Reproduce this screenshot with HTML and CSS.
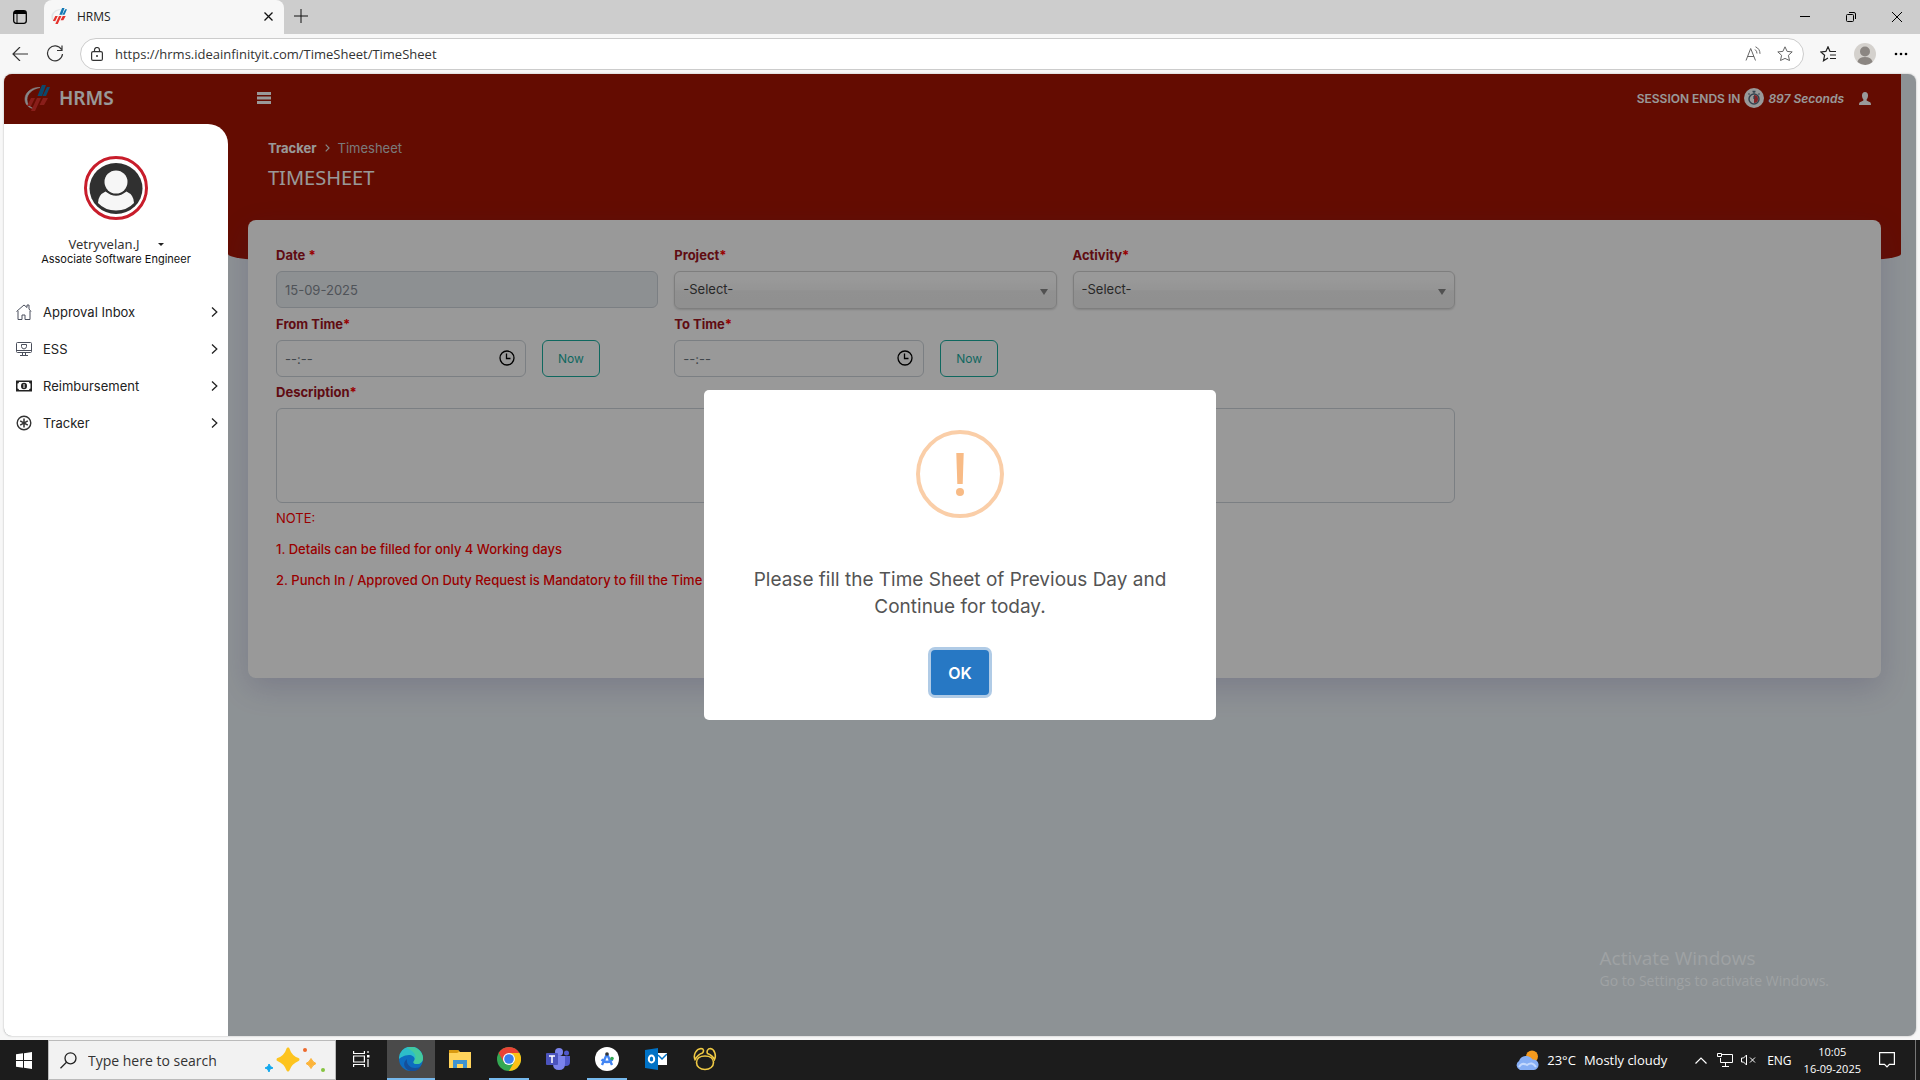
FILE: index.html
```
<!DOCTYPE html>
<html lang="en">
<head>
  <meta charset="UTF-8">
  <title>HRMS</title>
  <link rel="stylesheet" href="styles.css">
</head>
<body>
  <!-- shared logo -->
  <svg width="0" height="0" class="defs">
    <symbol id="logo" viewBox="0 0 26 26">
      <path d="M16 2.500C7 2 1 8 1 14c0 5 3 8.500 8 9.500-4-2-6-5-6-9C3 9 8 4 16 2.500z" fill="#dfe3e6" stroke="#dfe3e6" stroke-width=".6"/>
      <path d="M18 0h4l-4 11h-4.500zM23 2h3l-4 9h-3.500z" fill="#1379b5"/>
      <path d="M7 13h4l-4 8H3zM13 13h4l-6 13H7zM19 13h5l-4 7h-4.500z" fill="#e5322c"/>
    </symbol>
  </svg>

  <div class="tabbar">
    <button class="tab-menu" aria-label="Tab actions">
      <svg width="14" height="14" viewBox="0 0 14 14"><rect x=".7" y=".7" width="12.6" height="12.6" rx="2.5" fill="none" stroke="#000" stroke-width="1.3"/><path d="M1 2q0-1 1.500-1h9q1.500 0 1.500 1.500V4H1z"/><path d="M4 4v9" stroke="#000"/></svg>
    </button>
    <div class="tab">
      <svg width="16" height="16"><use href="#logo"/></svg>
      <span class="tab-title">HRMS</span>
      <button aria-label="Close tab"><svg width="9" height="9" viewBox="0 0 9 9"><path d="M.5.5l8 8M8.500.5l-8 8" stroke="#111" stroke-width="1.300"/></svg></button>
    </div>
    <button class="new-tab" aria-label="New tab"><svg width="14" height="14" viewBox="0 0 14 14"><path d="M7 0v14M0 7h14" stroke="#111"/></svg></button>
    <div class="window-buttons">
      <button aria-label="Minimize"><svg width="10" height="10" viewBox="0 0 10 10"><path d="M0 4.500h10" stroke="#000"/></svg></button>
      <button aria-label="Restore"><svg width="10" height="10" viewBox="0 0 10 10"><rect x=".5" y="2.500" width="7" height="7" rx="1" fill="none" stroke="#000"/><path d="M3 .5h5q1.500 0 1.500 1.500v5" fill="none" stroke="#000"/></svg></button>
      <button aria-label="Close"><svg width="10" height="10" viewBox="0 0 10 10"><path d="M0 0l10 10M10 0L0 10" stroke="#000"/></svg></button>
    </div>
  </div>

  <div class="toolbar">
    <button aria-label="Back"><svg width="16" height="14" viewBox="0 0 16 14"><path d="M16 7H1M8 0L1 7l7 7" fill="none" stroke="#333" stroke-width="1.200"/></svg></button>
    <button aria-label="Refresh"><svg width="18" height="18" viewBox="0 0 18 18"><path d="M15.500 4.500A7.500 7.500 0 1 0 16.500 9M16 .5v5h-5" fill="none" stroke="#333" stroke-width="1.200"/></svg></button>
    <div class="address">
      <svg width="12" height="14" viewBox="0 0 12 14"><rect x=".6" y="4.600" width="10.800" height="8.800" rx="1.500" fill="none" stroke="#333" stroke-width="1.200"/><path d="M3.500 4.500V3a2.500 2.500 0 0 1 5 0v1.500" fill="none" stroke="#333" stroke-width="1.200"/><circle cx="6" cy="9" r="1" fill="#333"/></svg>
      <input type="text" aria-label="Address" value="https://hrms.ideainfinityit.com/TimeSheet/TimeSheet">
      <svg class="read-aloud" width="16" height="16" viewBox="0 0 16 16" fill="none" stroke="#666"><path d="M1 14.500L5.700 2.500l4.800 12M2.500 10.500h6.500M10 3.500q2 1.500 2 4M10.500.8q4.500 2 4.500 7"/></svg>
      <svg width="16" height="16" viewBox="0 0 16 16"><path d="M8 .8l2.100 4.600 5.100.5-3.800 3.400 1.100 5.200L8 12.400l-4.500 2.100 1.100-5.200L.8 5.900l5.100-.5z" fill="none" stroke="#666"/></svg>
    </div>
    <button aria-label="Favorites"><svg width="16" height="16" viewBox="0 0 16 16" fill="none" stroke="#222"><path d="M9.900 5.200L8 .8 5.900 5.400.8 5.900l3.800 3.400-1.100 5.500L8 12M9.500 5.500H16M10 9h6M10 12.500h6" stroke-width="1.200"/></svg></button>
    <button aria-label="Profile"><svg width="22" height="22" viewBox="0 0 22 22"><circle cx="11" cy="11" r="11" fill="#d4d1cd"/><circle cx="11" cy="8.500" r="5" fill="#8b8682"/><path d="M3.500 19q1-5 7.500-5t7.500 5q-7 6-15 0z" fill="#8b8682"/></svg></button>
    <button aria-label="Settings"><svg width="14" height="4" viewBox="0 0 14 4"><circle cx="2" cy="2" r="1.300"/><circle cx="7" cy="2" r="1.300"/><circle cx="12" cy="2" r="1.300"/></svg></button>
  </div>

  <div class="viewport">
    <div class="page">
      <div class="red-band"></div>

      <header class="header">
        <div class="brand">
          <svg width="26" height="26"><use href="#logo"/></svg>
          <span>HRMS</span>
        </div>
        <button class="menu-toggle" aria-label="Toggle menu"><svg width="14" height="12" viewBox="0 0 14 12"><path d="M0 0h14v3H0zM0 4.500h14v3H0zM0 9h14v3H0z" fill="#fff"/></svg></button>
        <div class="session">
          <span>SESSION ENDS IN</span>
          <svg width="20" height="20" viewBox="0 0 20 20"><circle cx="10" cy="10" r="10" fill="#fff"/><circle cx="10" cy="11" r="5" fill="#fff" stroke="#5a7184" stroke-width="1.500"/><path d="M10 7a4 4 0 0 1 0 8z" fill="#e0393e"/><path d="M8.500 3.500h3M10 3.500v2M4.500 5.500l1 1M15.500 5.500l-1 1M10 8v3" stroke="#5a7184" stroke-width="1.300"/></svg>
          <em>897 Seconds</em>
          <svg class="user" width="12" height="13" viewBox="0 0 12 13"><path d="M6 0c2 0 3 1.500 3 3.500S8.200 7 7.500 7.800c0 1 .5 1.200 2 1.700 1.800.6 2.500 1 2.500 3.500H0c0-2.500.7-2.900 2.500-3.500 1.500-.5 2-.7 2-1.700C3.800 7 3 5.500 3 3.500S4 0 6 0z" fill="#fff"/></svg>
        </div>
      </header>

      <div class="columns">
        <aside class="sidebar">
          <svg class="avatar" width="64" height="64" viewBox="0 0 64 64"><circle cx="32" cy="32" r="30.500" fill="#fff" stroke="#c81d2b" stroke-width="3"/><ellipse cx="32" cy="32.500" rx="26.500" ry="25.500" fill="#303030"/><circle cx="32" cy="26" r="11.500" fill="#f6f6f6"/><path d="M14 47q0-8 7.500-11.500Q32 44 42.500 35.500 50 39 50 47q-7 7.500-18 7.500T14 47z" fill="#f6f6f6"/></svg>
          <button class="username">Vetryvelan.J <span class="caret"></span></button>
          <div class="role">Associate Software Engineer</div>
          <nav class="menu">
            <a href="#">
              <svg width="16" height="16" viewBox="0 0 16 16" fill="none" stroke="#4a4f5c"><path d="M.5 7.500L8 1l3 2.500V1h2v4l2 2.500M2 7v8.500h4V11h3v4.500h5V7"/></svg>
              <span>Approval Inbox</span>
              <svg width="7" height="10" viewBox="0 0 7 10"><path d="M1 .5L5.800 5 1 9.500" fill="none" stroke="#222" stroke-width="1.300"/></svg>
            </a>
            <a href="#">
              <svg width="16" height="16" viewBox="0 0 16 16" fill="none" stroke="#4a4f5c"><rect x=".5" y="1.500" width="15" height="10" rx="1"/><path d="M1 9.500h14M6.500 12v2M9.500 12v2M4 14.500h8M5.500 3.500h5v2q0 2-2.500 2.500-2.500-.5-2.500-2.500z"/></svg>
              <span>ESS</span>
              <svg width="7" height="10" viewBox="0 0 7 10"><path d="M1 .5L5.800 5 1 9.500" fill="none" stroke="#222" stroke-width="1.300"/></svg>
            </a>
            <a href="#">
              <svg width="16" height="16" viewBox="0 0 16 16"><rect x="0" y="2.500" width="16" height="11" fill="#222"/><path d="M3 4h10q0 1.500 1.500 1.500v5Q13 10.500 13 12H3q0-1.500-1.500-1.500v-5Q3 5.500 3 4z" fill="#fff"/><ellipse cx="8" cy="8" rx="3" ry="3.300" fill="#222"/><path d="M8 6v4" stroke="#fff"/></svg>
              <span>Reimbursement</span>
              <svg width="7" height="10" viewBox="0 0 7 10"><path d="M1 .5L5.800 5 1 9.500" fill="none" stroke="#222" stroke-width="1.300"/></svg>
            </a>
            <a href="#">
              <svg width="16" height="16" viewBox="0 0 16 16" fill="none" stroke="#333"><circle cx="8" cy="8" r="6.800" stroke-width="1.400"/><path d="M8 3.500v9M4.200 5.800l7.600 4.400M11.800 5.800l-7.600 4.400" stroke-width="1.500"/></svg>
              <span>Tracker</span>
              <svg width="7" height="10" viewBox="0 0 7 10"><path d="M1 .5L5.800 5 1 9.500" fill="none" stroke="#222" stroke-width="1.300"/></svg>
            </a>
          </nav>
        </aside>

        <main class="content">
          <div class="breadcrumb">
            <a href="#">Tracker</a>
            <svg width="5" height="8" viewBox="0 0 5 8"><path d="M.7.700L4 4 .7 7.300" fill="none" stroke="#ddd" stroke-width="1.200"/></svg>
            <span>Timesheet</span>
          </div>
          <h1>TIMESHEET</h1>

          <form class="card">
            <div class="field">
              <label for="date">Date <i>*</i></label>
              <input type="text" id="date" value="15-09-2025" readonly>
            </div>
            <div class="field">
              <label for="project">Project<i>*</i></label>
              <div class="select"><select id="project"><option>-Select-</option></select></div>
            </div>
            <div class="field">
              <label for="activity">Activity<i>*</i></label>
              <div class="select"><select id="activity"><option>-Select-</option></select></div>
            </div>
            <div class="field from">
              <label for="fromTime">From Time<i>*</i></label>
              <div class="time-row">
                <div class="time">
                  <input type="text" id="fromTime" placeholder="--:--">
                  <svg width="16" height="16" viewBox="0 0 16 16" fill="none" stroke="#000"><circle cx="8" cy="8" r="7" stroke-width="1.300"/><path d="M7.500 3.500V8.500h4" stroke-width="1.300"/></svg>
                </div>
                <button type="button" class="now">Now</button>
              </div>
            </div>
            <div class="field">
              <label for="toTime">To Time<i>*</i></label>
              <div class="time-row">
                <div class="time">
                  <input type="text" id="toTime" placeholder="--:--">
                  <svg width="16" height="16" viewBox="0 0 16 16" fill="none" stroke="#000"><circle cx="8" cy="8" r="7" stroke-width="1.300"/><path d="M7.500 3.500V8.500h4" stroke-width="1.300"/></svg>
                </div>
                <button type="button" class="now">Now</button>
              </div>
            </div>
            <div class="field wide">
              <label for="description">Description<i>*</i></label>
              <textarea id="description"></textarea>
            </div>
            <div class="notes">
              <p class="note-title">NOTE:</p>
              <p>1. Details can be filled for only 4 Working days</p>
              <p>2. Punch In / Approved On Duty Request is Mandatory to fill the Time Sheet</p>
            </div>
          </form>
        </main>
      </div>
    </div>

    <div class="backdrop">
      <div class="modal" role="dialog" aria-modal="true">
        <svg class="modal-icon" width="88" height="88" viewBox="0 0 88 88"><circle cx="44" cy="44" r="42" fill="none" stroke="#facea8" stroke-width="4"/><path d="M40.300 23h7.400l-1 31h-5.400z" fill="#f8bb86"/><circle cx="44" cy="62" r="4" fill="#f8bb86"/></svg>
        <p>Please fill the Time Sheet of Previous Day and Continue for today.</p>
        <button class="ok">OK</button>
      </div>
    </div>

    <div class="watermark">
      <div class="watermark-title">Activate Windows</div>
      <div>Go to Settings to activate Windows.</div>
    </div>
  </div>

  <div class="taskbar">
    <button class="start" aria-label="Start"><svg width="16" height="17" viewBox="0 0 16 17"><path d="M0 2.300l7-1V8H0zM8 1.200L16 0v8H8zM0 9h7v6.700l-7-1zM8 9h8v8l-8-1.200z" fill="#fff"/></svg></button>
    <div class="search">
      <svg width="17" height="17" viewBox="0 0 17 17" fill="none" stroke="#222" stroke-width="1.300"><circle cx="10.500" cy="6.300" r="5.500"/><path d="M6.500 10.200L.5 16.300"/></svg>
      <input type="text" aria-label="Search" placeholder="Type here to search">
      <svg width="60" height="28" viewBox="0 0 60 28"><path d="M23 3q2.500 8 10 10.500-7.500 3-10 10.500-2.500-7.500-10-10.500Q20.500 11 23 3z" fill="#fdc41f" stroke="#fdc41f" stroke-width="3" stroke-linejoin="round"/><path d="M46 12.500q1.500 3.500 5 5-3.500 1.500-5 5-1.500-3.500-5-5 3.500-1.500 5-5z" fill="#fcb43a" stroke="#fcb43a"/><path d="M4 18l1.500 2.500L8 22l-3 1-1 3-1.500-3L0 22l3-1.500z" fill="#12a8ee" stroke="#12a8ee"/><circle cx="40" cy="4" r="2" fill="#ee6a2c"/><circle cx="58" cy="24" r="2" fill="#86c440"/></svg>
    </div>
    <button class="app task-view" aria-label="Task view"><svg width="17" height="16" viewBox="0 0 17 16" fill="none" stroke="#fff" stroke-width="1.200"><path d="M.6 0v2.500h10.800V0M.6 16v-2.500h10.800V16M.6 5h10.800v6H.6zM15 0v2M15 8v8"/><path d="M14 4h2.500v2.500H14z" fill="#fff" stroke="none"/></svg></button>
    <button class="app current" aria-label="Microsoft Edge"><svg width="24" height="24" viewBox="0 0 24 24"><circle cx="12" cy="12" r="12" fill="#0d6cc0"/><path d="M0 12A12 12 0 0 1 24 11c0 4-3 6-6 6-4 0-4-2-3-3 2-3-1-6-5-6-5 0-9 3-10 4z" fill="#2dbdc9"/><path d="M12 0a12 12 0 0 1 12 11c0 4-3 6-6 6-4 0-4-2-3-3 4-6-1-10-7-13z" fill="#4fd08a" opacity=".7"/><path d="M8 12c-1 5 3 9 8 9 3 0 5-1 6-2-3 6-10 6-13 4-5-3-5-8-1-11z" fill="#154f9a"/></svg></button>
    <button class="app" aria-label="File Explorer"><svg width="22" height="18" viewBox="0 0 22 18"><path d="M0 0h9l2 2h11v16H0z" fill="#ffd35b"/><path d="M0 0h9l1 2-2 1H0z" fill="#d99a11"/><path d="M4 18v-8h14v8h-4v-4H8v4z" fill="#3f93d0"/></svg></button>
    <button class="app open" aria-label="Google Chrome"><svg width="24" height="24" viewBox="0 0 24 24"><circle cx="12" cy="12" r="12" fill="#34a853"/><path d="M12 0a12 12 0 0 1 10.400 6H12L6.800 15 1.600 6A12 12 0 0 1 12 0z" fill="#ea4335"/><path d="M22.400 6A12 12 0 0 1 12 24l5.200-9V9L12 6z" fill="#fbc116"/><circle cx="12" cy="12" r="6" fill="#fff"/><circle cx="12" cy="12" r="4.800" fill="#3b7ded"/></svg></button>
    <button class="app" aria-label="Microsoft Teams"><svg width="24" height="22" viewBox="0 0 24 22"><circle cx="13" cy="4" r="4" fill="#7b83eb"/><circle cx="20.500" cy="5" r="2.500" fill="#5059c9"/><path d="M17 8h7v6q0 4-4 4h-3z" fill="#5059c9"/><path d="M7 8h12v8q0 6-6 6t-6-6z" fill="#7b83eb"/><rect y="5" width="12" height="12" rx="1" fill="#4b53bc"/><path d="M3 8h6M6 8v7" stroke="#fff" stroke-width="1.500"/></svg></button>
    <button class="app open" aria-label="Android Studio"><svg width="24" height="24" viewBox="0 0 24 24"><circle cx="12" cy="12" r="12" fill="#fff"/><path d="M12 7L7 18M12 7l5 11M6.500 12.500q5.500 5 11 0" fill="none" stroke="#4285f4" stroke-width="2.400"/><circle cx="12" cy="7" r="1.800" fill="#333"/><circle cx="17" cy="11.500" r="1.800" fill="#34a853"/></svg></button>
    <button class="app" aria-label="Outlook"><svg width="22" height="22" viewBox="0 0 22 22"><path d="M0 2l13-2v22L0 20z" fill="#0072c6"/><rect x="13" y="5" width="9" height="12" fill="#fff"/><path d="M13 7l4 4 5-5" fill="none" stroke="#0072c6" stroke-width="1.500"/><ellipse cx="6.500" cy="11" rx="2.700" ry="3.500" fill="none" stroke="#fff" stroke-width="2"/></svg></button>
    <button class="app" aria-label="Navicat"><svg width="24" height="24" viewBox="0 0 24 24" fill="none" stroke="#efc944" stroke-width="1.600"><path d="M12 9c5 0 8.500 2.500 8.500 6.500S17 22.500 12 22.500s-8.500-3-8.500-7S7 9 12 9z"/><path d="M2 12.500C0 8 3 2 8 1.500c3 0 3 3 1.500 4.500C6 7 4 9 2 12.500zM21.500 12.500c2-4 0-10.500-4-11-3 0-4 3-3 5 2.500 1 5.500 2.500 7 6z"/></svg></button>
    <div class="tray">
      <svg width="24" height="20" viewBox="0 0 24 20"><circle cx="17" cy="6.500" r="6" fill="#f59a1d"/><path d="M5 20a5 5 0 0 1-1-9 7.500 7.500 0 0 1 13.500-1.500A5.300 5.300 0 0 1 19 20z" fill="#86aef4"/><path d="M4 17q3-5 8-2 5-4 9 2" fill="none" stroke="#c3d8fd" stroke-width="2"/></svg>
      <span class="weather">23°C</span>
      <span class="weather">Mostly cloudy</span>
      <svg class="chevron" width="12" height="7" viewBox="0 0 12 7"><path d="M.5 6.500L6 1l5.500 5.500" fill="none" stroke="#fff" stroke-width="1.200"/></svg>
      <svg width="16" height="14" viewBox="0 0 16 14" fill="none" stroke="#fff"><path d="M5 1.500h10.500v8H3.500V5M.5.500h4v3h-4zM5 13.500h7M8.500 10v3"/></svg>
      <svg width="15" height="12" viewBox="0 0 15 12" fill="none" stroke="#fff"><path d="M.5 4h2l3-3v10l-3-3h-2zM9 3.500l5 5M14 3.500l-5 5"/></svg>
      <span class="lang">ENG</span>
      <div class="clock"><span>10:05</span><span>16-09-2025</span></div>
      <svg width="16" height="16" viewBox="0 0 16 16"><path d="M.6.600h14.800v11.800h-5L8 15l-2.500-2.600H.6z" fill="none" stroke="#fff" stroke-width="1.200"/></svg>
      <div class="show-desktop"></div>
    </div>
  </div>
</body>
</html>
```

FILE: styles.css
```
* {
  box-sizing: border-box;
}
body {
  margin: 0;
  height: 100vh;
  display: flex;
  flex-direction: column;
  background: #f7f7f7;
  font-family: "Open Sans", "Noto Sans", sans-serif;
  font-size: 12px;
}
button {
  border: 0;
  background: none;
  padding: 0;
  font: inherit;
  color: inherit;
}
input, select, textarea {
  font: inherit;
  color: inherit;
}
svg {
  display: block;
  flex: none;
}
a {
  color: inherit;
  text-decoration: none;
}
.defs {
  position: absolute;
}

/* browser */
.tabbar {
  display: flex;
  height: 34px;
  flex: none;
  background: #cdcdcd;
}
.tabbar button {
  display: flex;
  align-items: center;
  justify-content: center;
}
.tabbar .tab-menu {
  width: 44px;
  padding-right: 4px;
}
.tab {
  width: 240px;
  display: flex;
  align-items: center;
  padding: 0 11px 2px 7px;
  gap: 10px;
  background: #f7f7f7;
  border-radius: 8px 8px 0 0;
}
.tab-title {
  flex: 1;
  color: #222;
}
.tabbar .new-tab {
  width: 34px;
  padding-bottom: 2px;
}
.window-buttons {
  display: flex;
  margin-left: auto;
}
.window-buttons button {
  width: 46px;
}
.toolbar {
  display: flex;
  align-items: center;
  height: 40px;
  flex: none;
  padding: 0 12px;
  gap: 18px;
}
.address {
  flex: 1;
  display: flex;
  align-items: center;
  height: 32px;
  margin: 0 -2px;
  padding: 0 10px;
  gap: 12px;
  background: #fff;
  border: 1px solid #ccc;
  border-radius: 16px;
}
.address input {
  flex: 1;
  border: 0;
  padding: 0;
  background: none;
  font-size: 13px;
  color: #333;
}
.read-aloud {
  margin-right: 4px;
}

/* page */
.viewport {
  position: relative;
  flex: 1;
  margin: 0 4px 4px;
  border-radius: 8px;
  overflow: hidden;
  background: #ecf3f8;
  box-shadow: 0 0 2px #aaa;
  font-family: Inter, Roboto, sans-serif;
  font-size: 13px;
}
.page {
  height: 100%;
  display: flex;
  flex-direction: column;
}
.red-band {
  position: absolute;
  top: 0;
  left: 224px;
  right: 15px;
  height: 186px;
  background: #a71503;
  border-radius: 0 0 40px 40px / 0 0 6px 6px;
}
.header {
  position: relative;
  display: flex;
  align-items: center;
  height: 50px;
  flex: none;
  margin-right: 15px;
  padding: 0 30px 2px 20px;
  background: #a71503;
  color: #fff;
}
.brand {
  display: flex;
  align-items: center;
  gap: 9px;
  width: 233px;
  font: 600 19px "Noto Sans", sans-serif;
}
.session {
  display: flex;
  align-items: center;
  gap: 4px;
  margin-left: auto;
  font-size: 12px;
  font-weight: 600;
}
.session .user {
  margin-left: 11px;
}
.columns {
  flex: 1;
  display: flex;
  /* red behind the rounded corner of the sidebar */
  background: linear-gradient(#a71503, #a71503) 0 0 / 224px 20px no-repeat;
}
.sidebar {
  position: relative;
  z-index: 2;
  width: 224px;
  flex: none;
  display: flex;
  flex-direction: column;
  align-items: center;
  padding-top: 32px;
  background: #fff;
  border-radius: 0 20px 0 0;
}
.username {
  display: flex;
  align-items: center;
  gap: 18px;
  margin-top: 16px;
  line-height: 16px;
  color: #333;
  font-family: "Noto Sans", sans-serif;
}
.caret {
  border: 3px solid transparent;
  border-top-color: #222;
  border-bottom: 0;
}
.role {
  font-size: 11px;
  line-height: 14px;
  color: #111;
}
.menu {
  align-self: stretch;
  margin-top: 27px;
}
.menu a {
  display: flex;
  align-items: center;
  gap: 11px;
  height: 37px;
  padding: 0 10px 0 12px;
  color: #222;
}
.menu span {
  flex: 1;
}
.content {
  position: relative;
  flex: 1;
  padding: 15px 35px 0 20px;
}
.breadcrumb {
  display: flex;
  align-items: center;
  gap: 8px;
  height: 18px;
  padding-left: 20px;
  color: #ccc;
}
.breadcrumb a {
  font-weight: 700;
  color: #fff;
}
h1 {
  margin: 7px 0 28px;
  padding-left: 20px;
  color: #fff;
  font: 400 20px/28px "Noto Sans", sans-serif;
}
.card {
  display: grid;
  grid-template-columns: repeat(4, 1fr);
  column-gap: 16px;
  padding: 20px 28px 78px;
  background: #fff;
  border-radius: 8px;
  box-shadow: 0 10px 30px rgba(82, 63, 145, 0.2);
}
label {
  display: block;
  line-height: 31px;
  font-weight: 700;
  color: #a0141e;
}
label i {
  font-style: normal;
  color: #f00;
}
.from {
  grid-column: 1;
}
.wide {
  grid-column: 1 / 4;
}
.field input, .field select, .field textarea {
  display: block;
  width: 100%;
  height: 37px;
  padding: 0 8px;
  border: 1px solid #ced4da;
  border-radius: 6px;
  background: #fff;
  color: #495057;
}
.field #date {
  background: #ecf0f4;
  color: #848b93;
}
.field textarea {
  height: 95px;
  resize: none;
}
.select {
  position: relative;
}
.select::after {
  content: "";
  position: absolute;
  right: 9px;
  top: 18px;
  border: 4px solid transparent;
  border-top: 6px solid #888;
  border-bottom: 0;
}
.field select {
  appearance: none;
  height: 38px;
  padding-bottom: 2px;
  border-color: #d2d2d2;
  background: linear-gradient(#fff 20%, #f8f8f8 50%, #f2f2f2 52%, #f0f0f0);
  box-shadow: 0 1px 2px rgba(0, 0, 0, 0.15);
  color: #444;
}
.time-row {
  display: flex;
  gap: 16px;
}
.time {
  position: relative;
  width: 250px;
}
.time svg {
  position: absolute;
  right: 11px;
  top: 10px;
}
.time input::placeholder {
  color: #6c757d;
}
.now {
  width: 58px;
  border: 1px solid #1aae9f;
  border-radius: 6px;
  color: #1aae9f;
  font-size: 12px;
}
.notes {
  grid-column: 1 / 4;
  padding-top: 4px;
  color: #f00;
  font-weight: 500;
}
.notes p {
  margin: 0 0 9px;
  line-height: 22px;
}
.notes .note-title {
  font-weight: 400;
}

/* alert */
.backdrop {
  position: absolute;
  inset: 0;
  z-index: 1;
  display: flex;
  align-items: center;
  justify-content: center;
  background: rgba(0, 0, 0, 0.4);
}
.modal {
  width: 512px;
  display: flex;
  flex-direction: column;
  align-items: center;
  padding: 40px 40px 25px;
  background: #fff;
  border-radius: 5px;
}
.modal p {
  margin: 48px 0 30px;
  font-size: 19px;
  line-height: 27px;
  text-align: center;
  color: #545454;
}
.ok {
  width: 58px;
  height: 45px;
  flex: none;
  border-radius: 4px;
  background: #2778c4;
  box-shadow: 0 0 0 3px #b0cbe6;
  color: #fff;
  font-size: 16px;
  font-weight: 600;
}
.watermark {
  position: absolute;
  right: 87px;
  bottom: 45px;
  z-index: 2;
  color: #9fa2a4;
  font: 14px/20px "Open Sans", sans-serif;
}
.watermark-title {
  font-size: 19px;
  line-height: 26px;
}

/* taskbar */
.taskbar {
  display: flex;
  height: 40px;
  flex: none;
  background: #1c1c1c;
  color: #fff;
}
.taskbar button {
  display: flex;
  align-items: center;
  justify-content: center;
  width: 48px;
}
.search {
  display: flex;
  align-items: center;
  width: 288px;
  padding: 0 10px 0 11px;
  gap: 11px;
  background: #f2f2f2;
  border: 1px solid #bbb;
}
.search input {
  flex: 1;
  min-width: 0;
  border: 0;
  padding: 0;
  background: none;
  font-size: 14px;
}
.search input::placeholder {
  color: #333;
}
.taskbar .app {
  margin-right: 1px;
  border-bottom: 2px solid transparent;
}
.taskbar .task-view {
  width: 50px;
}
.taskbar .current {
  background: #4a4a4a;
  border-bottom-color: #76b9ed;
}
.taskbar .open {
  width: 40px;
  margin: 0 5px 0 4px;
  border-bottom-color: #76b9ed;
}
.tray {
  display: flex;
  align-items: center;
  gap: 8px;
  margin-left: auto;
}
.weather {
  font-size: 13px;
}
.chevron {
  margin: 0 2px 0 20px;
}
.lang {
  margin-left: 3px;
}
.clock {
  display: flex;
  flex-direction: column;
  align-items: center;
  margin: 0 10px 0 4px;
  font-size: 11px;
  line-height: 17px;
}
.show-desktop {
  width: 5px;
  height: 40px;
  margin-left: 12px;
  border-left: 1px solid #777;
}
```
